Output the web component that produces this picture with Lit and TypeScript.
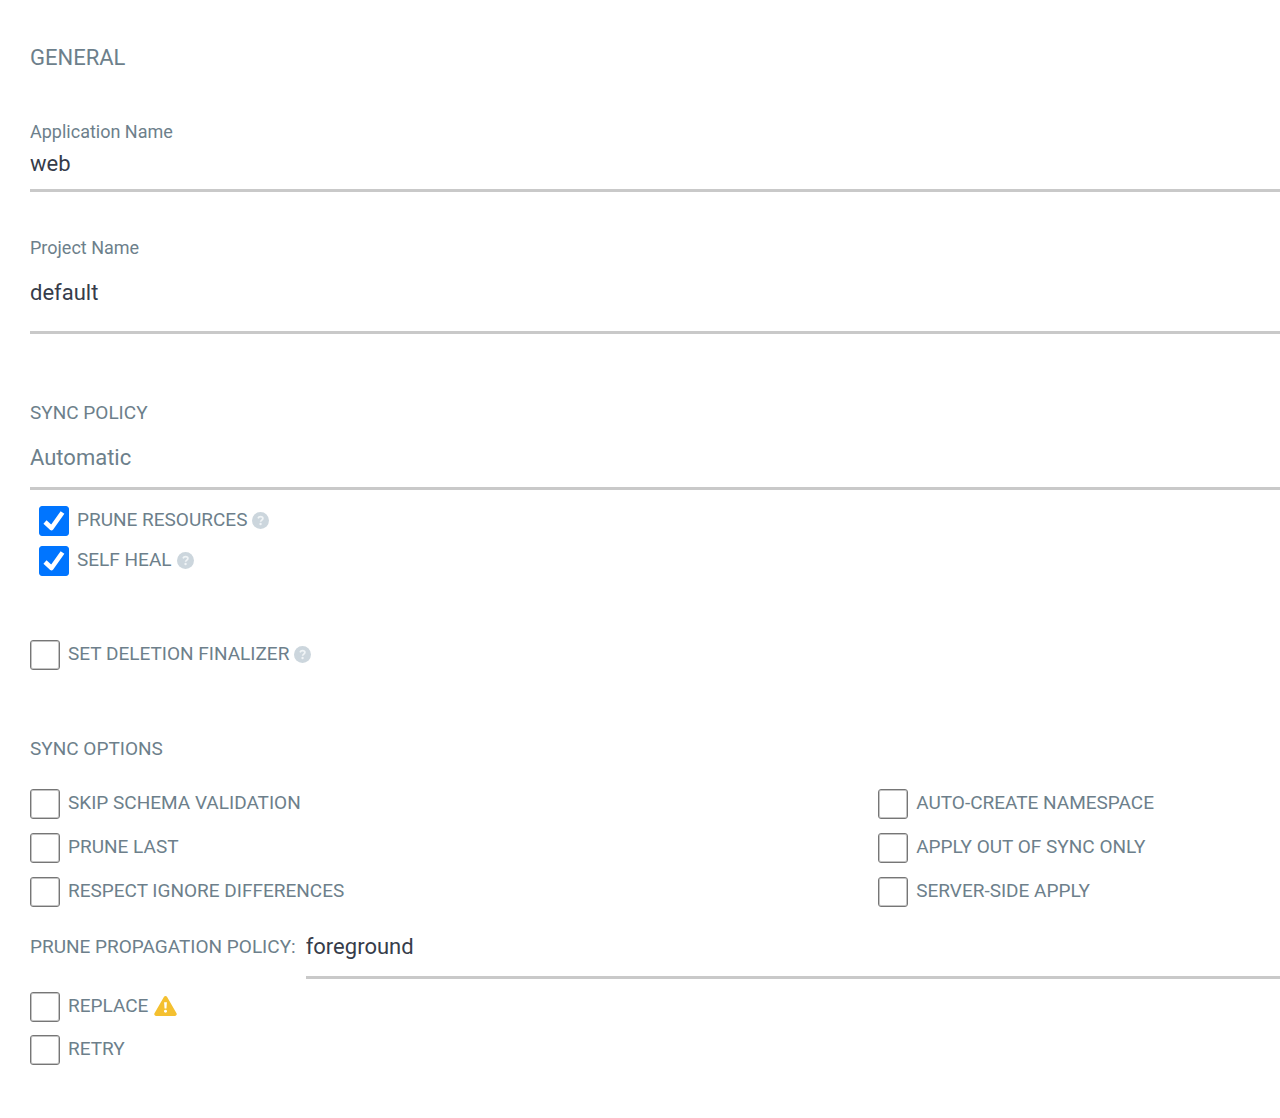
import { LitElement, html, css, nothing } from "lit";
import { customElement, property } from "lit/decorators.js";

@customElement("help-icon")
export class HelpIcon extends LitElement {
  static styles = css`
    :host {
      display: block;
      flex: none;
      width: 17px;
      height: 17px;
    }
    .glyph {
      display: block;
      width: 100%;
      height: 100%;
    }
  `;

  render() {
    return html`
      <svg class="glyph" viewBox="0 0 512 512" role="img" aria-label="Help">
        <circle cx="256" cy="256" r="256" fill="#ccd6dd" />
        <path
          d="M182 192c14-36 38-52 74-52 42 0 72 22 72 58 0 46-68 48-68 96"
          fill="none"
          stroke="#f0f4f6"
          stroke-width="52"
        />
        <circle cx="258" cy="362" r="36" fill="#f0f4f6" />
      </svg>
    `;
  }
}

@customElement("warning-icon")
export class WarningIcon extends LitElement {
  static styles = css`
    :host {
      display: block;
      flex: none;
      width: 23px;
      height: 20px;
    }
    .glyph {
      display: block;
      width: 100%;
      height: 100%;
    }
  `;

  render() {
    return html`
      <svg class="glyph" viewBox="0 0 576 512" role="img" aria-label="Warning">
        <path
          d="M569.5 440c18.500 32-4.700 72-41.600 72H48.100c-37 0-60-40-41.600-72L246.400 24c18.500-32 64.700-32 83.200 0l239.900 416z"
          fill="#f4c030"
        />
        <path d="M252 160h72l-12 160h-48z" fill="#fff" />
        <circle cx="288" cy="392" r="38" fill="#fff" />
      </svg>
    `;
  }
}

@customElement("check-option")
export class CheckOption extends LitElement {
  @property() label = "";
  @property() icon: "" | "help" | "warning" = "";
  @property({ type: Boolean }) checked = false;

  static styles = css`
    :host {
      display: flex;
      align-items: center;
      font-size: 19px;
      line-height: 28px;
    }
    .box {
      flex: none;
      box-sizing: border-box;
      width: 30px;
      height: 30px;
      margin: 0;
      appearance: none;
      border: 1px solid #767676;
      border-radius: 3px;
      box-shadow: inset 0 0 0 1px #c4c4c4;
      background: #fff;
    }
    .box:checked {
      border-color: #0075ff;
      box-shadow: none;
      background: #0075ff
        url("data:image/svg+xml,%3Csvg xmlns='http://www.w3.org/2000/svg' viewBox='0 0 28 28'%3E%3Cpath d='M5 15l6.500 6L22.500 5.500' fill='none' stroke='white' stroke-width='4.600' stroke-linejoin='round'/%3E%3C/svg%3E")
        center / 100% 100% no-repeat;
    }
    .text {
      padding: 0 0 2px 8px;
    }
    .help {
      margin: 0 0 2px 5px;
    }
    .warning {
      margin: 0 0 2px 6px;
    }
  `;

  render() {
    return html`
      <input class="box" id="box" type="checkbox" .checked=${this.checked} />
      <label class="text" for="box">${this.label}</label>
      ${this.icon === "help" ? html`<help-icon class="help"></help-icon>` : nothing}
      ${this.icon === "warning" ? html`<warning-icon class="warning"></warning-icon>` : nothing}
    `;
  }
}

const SYNC_OPTIONS = [
  "SKIP SCHEMA VALIDATION",
  "AUTO-CREATE NAMESPACE",
  "PRUNE LAST",
  "APPLY OUT OF SYNC ONLY",
  "RESPECT IGNORE DIFFERENCES",
  "SERVER-SIDE APPLY",
];

@customElement("app-root")
export class AppRoot extends LitElement {
  static styles = css`
    :host {
      display: block;
      background: #fff;
      color: #6d7f8b;
      font-family: Roboto, "Liberation Sans", sans-serif;
    }
    .form {
      display: flex;
      flex-direction: column;
      padding: 43px 0 52px 30px;
    }
    .title,
    .heading {
      margin: 0;
      font-weight: 400;
    }
    .title {
      font-size: 22px;
      line-height: 30px;
    }
    .heading {
      font-size: 19px;
      line-height: 28px;
    }
    .field {
      display: flex;
      flex-direction: column;
    }
    .name {
      margin-top: 47px;
    }
    .project {
      margin-top: 44px;
    }
    .label {
      font-size: 18px;
      line-height: 24px;
    }
    .control {
      display: block;
      box-sizing: border-box;
      width: 100%;
      margin: 0;
      padding: 0;
      border: 0;
      border-bottom: 3px solid #c9c9c9;
      border-radius: 0;
      outline: none;
      appearance: none;
      background: transparent;
      color: #363c4a;
      font-family: inherit;
      font-size: 22px;
      line-height: 30px;
    }
    .control.short {
      height: 48px;
      padding: 4px 0 11px;
    }
    .control.tall {
      height: 74px;
      padding: 17px 0 24px;
    }
    .control.policy {
      height: 63px;
      padding: 16px 0 14px;
      color: #6d7f8b;
    }
    .control.inline {
      height: 47px;
      padding: 0 0 14px;
    }
    .section {
      margin-top: 65px;
    }
    .automated {
      display: flex;
      flex-direction: column;
      gap: 10px;
      padding: 16px 0 0 9px;
    }
    .finalizer {
      margin-top: 64px;
    }
    .options {
      margin-top: 65px;
    }
    .grid {
      display: grid;
      grid-template-columns: 19fr 9fr;
      row-gap: 14px;
      margin-top: 26px;
    }
    .propagation {
      display: flex;
      align-items: flex-start;
      gap: 10px;
      margin-top: 25px;
    }
    .propagation .heading {
      flex: none;
      line-height: 30px;
    }
    .last {
      display: flex;
      flex-direction: column;
      gap: 13px;
      margin-top: 13px;
    }
  `;

  render() {
    return html`
      <form class="form">
        <h1 class="title">GENERAL</h1>

        <div class="field name">
          <label class="label" for="name">Application Name</label>
          <input class="control short" id="name" type="text" .value=${"web"} />
        </div>

        <div class="field project">
          <label class="label" for="project">Project Name</label>
          <input class="control tall" id="project" type="text" .value=${"default"} />
        </div>

        <div class="field section">
          <label class="heading" for="policy">SYNC POLICY</label>
          <select class="control policy" id="policy">
            <option>Automatic</option>
          </select>
        </div>
        <div class="automated">
          <check-option label="PRUNE RESOURCES" icon="help" checked></check-option>
          <check-option label="SELF HEAL" icon="help" checked></check-option>
        </div>

        <check-option class="finalizer" label="SET DELETION FINALIZER" icon="help"></check-option>

        <h2 class="heading options">SYNC OPTIONS</h2>
        <div class="grid">
          ${SYNC_OPTIONS.map((label) => html`<check-option label=${label}></check-option>`)}
        </div>

        <div class="propagation">
          <label class="heading" for="propagation">PRUNE PROPAGATION POLICY:</label>
          <select class="control inline" id="propagation">
            <option>foreground</option>
          </select>
        </div>

        <div class="last">
          <check-option label="REPLACE" icon="warning"></check-option>
          <check-option label="RETRY"></check-option>
        </div>
      </form>
    `;
  }
}
